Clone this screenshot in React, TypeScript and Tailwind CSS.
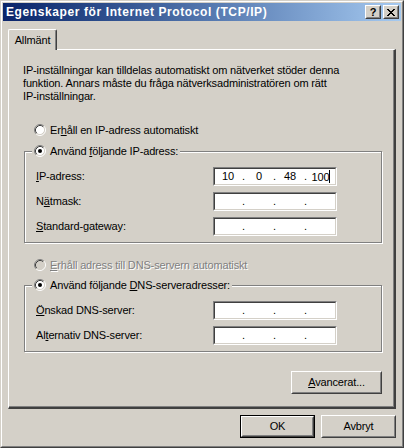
import React from "react";

const FONT = "font-['Liberation_Sans','Arial',sans-serif]";

function Raised({ className = "", children }: { className?: string; children?: React.ReactNode }) {
  return (
    <div className={`border border-t-white border-l-white border-r-[#404040] border-b-[#404040] bg-[#D4D0C8] ${className}`}>
      <div className="h-full w-full border border-t-[#D4D0C8] border-l-[#D4D0C8] border-r-[#808080] border-b-[#808080] flex items-center justify-center">
        {children}
      </div>
    </div>
  );
}

function Radio({ checked, disabled }: { checked?: boolean; disabled?: boolean }) {
  return (
    <svg width="12" height="12" viewBox="0 0 12 12" className="shrink-0">
      <circle cx="6" cy="6" r="4.5" fill={disabled ? "#D4D0C8" : "#ffffff"} />
      <path d="M2.11 9.89A5.5 5.5 0 0 1 9.89 2.11" fill="none" stroke="#808080" strokeWidth="1" />
      <path d="M9.89 2.11A5.5 5.5 0 0 1 2.11 9.89" fill="none" stroke="#ffffff" strokeWidth="1" />
      <path d="M2.82 9.18A4.5 4.5 0 0 1 9.18 2.82" fill="none" stroke="#404040" strokeWidth="1" />
      <path d="M9.18 2.82A4.5 4.5 0 0 1 2.82 9.18" fill="none" stroke="#D4D0C8" strokeWidth="1" />
      {checked && <circle cx="6" cy="6" r="2" fill={disabled ? "#808080" : "#000000"} />}
    </svg>
  );
}

function IpField({ parts, caret }: { parts?: string[]; caret?: boolean }) {
  const segs = parts ?? ["", "", "", ""];
  return (
    <div className="w-[124px] h-[19px] bg-white border border-t-[#808080] border-l-[#808080] border-r-white border-b-white">
      <div className="h-full border border-t-[#404040] border-l-[#404040] border-r-[#D4D0C8] border-b-[#D4D0C8] flex items-center">
        {segs.map((s, i) => (
          <React.Fragment key={i}>
            {i > 0 && <span className="w-[5px] text-center">.</span>}
            <span className="w-[26px] text-center">
              {s}
              {caret && i === 3 && <span className="inline-block w-px h-[13px] bg-black align-[-2px]" />}
            </span>
          </React.Fragment>
        ))}
      </div>
    </div>
  );
}

function FieldRow({ label, parts, caret }: { label: React.ReactNode; parts?: string[]; caret?: boolean }) {
  return (
    <div className="flex items-center pl-[11px] pr-[44px]">
      <div className="flex-1">{label}</div>
      <IpField parts={parts} caret={caret} />
    </div>
  );
}

function Group({ legend, children }: { legend: React.ReactNode; children: React.ReactNode }) {
  return (
    <div className="border border-[#808080] shadow-[inset_1px_1px_0_#fff,1px_1px_0_#fff] pb-[6px] flex flex-col gap-[6px]">
      <div className="-mt-[9px] ml-[7px] px-[2px] w-fit h-[16px] bg-[#D4D0C8] flex items-center gap-[4px]">
        <Radio checked />
        <span>{legend}</span>
      </div>
      <div className="mt-[2px] flex flex-col gap-[6px]">{children}</div>
    </div>
  );
}

export default function App() {
  return (
    <div className={`w-[404px] h-[448px] bg-[#D4D0C8] text-black text-[11px] leading-[13px] tracking-[-0.15px] ${FONT} border border-t-[#D4D0C8] border-l-[#D4D0C8] border-r-[#404040] border-b-[#404040]`}>
      <div className="h-full border border-t-white border-l-white border-r-[#808080] border-b-[#808080] p-px flex flex-col">
        {/* Title bar */}
        <div className="h-[18px] shrink-0 bg-gradient-to-r from-[#0A246A] to-[#A6CAF0] flex items-center pl-[3px] pr-[2px]">
          <span className="flex-1 text-white font-bold text-[12px] tracking-[0.6px]">Egenskaper för Internet Protocol (TCP/IP)</span>
          <div className="flex gap-[2px]">
            <Raised className="w-[16px] h-[14px]">
              <span className="font-bold text-[11px] leading-none tracking-normal">?</span>
            </Raised>
            <Raised className="w-[16px] h-[14px]">
              <svg width="8" height="7" viewBox="0 0 8 7">
                <path d="M0 0h2v1h1v1h2V1h1V0h2v1H7v1H6v1H5v1h1v1h1v1h1v1H6V6H5V5H3v1H2v1H0V6h1V5h1V4h1V3H2V2H1V1H0z" fill="#000" />
              </svg>
            </Raised>
          </div>
        </div>

        {/* Body */}
        <div className="flex-1 flex flex-col px-[5px]">
          {/* Tabs */}
          <div className="mt-[8px] h-[20px] flex">
            <div className="relative z-10 w-[49px] h-[21px] bg-[#D4D0C8] border-t border-l border-r border-t-white border-l-white border-r-[#404040] rounded-t-[2px] shadow-[inset_-1px_0_0_#808080] flex items-center justify-center">
              Allmänt
            </div>
          </div>

          {/* Panel */}
          <div className="h-[360px] shrink-0 border-t border-l border-t-white border-l-white border-r-2 border-b-2 border-r-[#404040] border-b-[#404040] shadow-[inset_-1px_-1px_0_#808080] pl-[15px] pr-[12px] pt-[14px] flex flex-col">
            <p className="-ml-[1px]">
              IP-inställningar kan tilldelas automatiskt om nätverket stöder denna
              <br />
              funktion. Annars måste du fråga nätverksadministratören om rätt
              <br />
              IP-inställningar.
            </p>

            <div className="mt-[19px] h-[16px] pl-[10px] flex items-center gap-[4px]">
              <Radio />
              <span>
                Er<u>h</u>åll en IP-adress automatiskt
              </span>
            </div>

            <div className="mt-[13px]">
              <Group
                legend={
                  <>
                    Använd <u>f</u>öljande IP-adress:
                  </>
                }
              >
                <FieldRow label={<><u>I</u>P-adress:</>} parts={["10", "0", "48", "100"]} caret />
                <FieldRow label={<>N<u>ä</u>tmask:</>} />
                <FieldRow label={<><u>S</u>tandard-gateway:</>} />
              </Group>
            </div>

            <div className="mt-[14px] h-[16px] pl-[10px] flex items-center gap-[4px]">
              <Radio disabled />
              <span className="text-[#808080] [text-shadow:1px_1px_0_#fff]">
                <u>E</u>rhåll adress till DNS-servern automatiskt
              </span>
            </div>

            <div className="mt-[12px]">
              <Group
                legend={
                  <>
                    Använd följande <u>D</u>NS-serveradresser:
                  </>
                }
              >
                <FieldRow label={<><u>Ö</u>nskad DNS-server:</>} />
                <FieldRow label={<>Al<u>t</u>ernativ DNS-server:</>} />
              </Group>
            </div>

            <div className="mt-[19px] flex justify-end">
              <Raised className="w-[91px] h-[23px]">
                <span>
                  <u>A</u>vancerat...
                </span>
              </Raised>
            </div>
          </div>

          {/* Dialog buttons */}
          <div className="mt-[6px] flex justify-end gap-[6px]">
            <div className="border border-black">
              <Raised className="w-[73px] h-[21px]">OK</Raised>
            </div>
            <Raised className="w-[75px] h-[23px]">Avbryt</Raised>
          </div>
        </div>
      </div>
    </div>
  );
}
